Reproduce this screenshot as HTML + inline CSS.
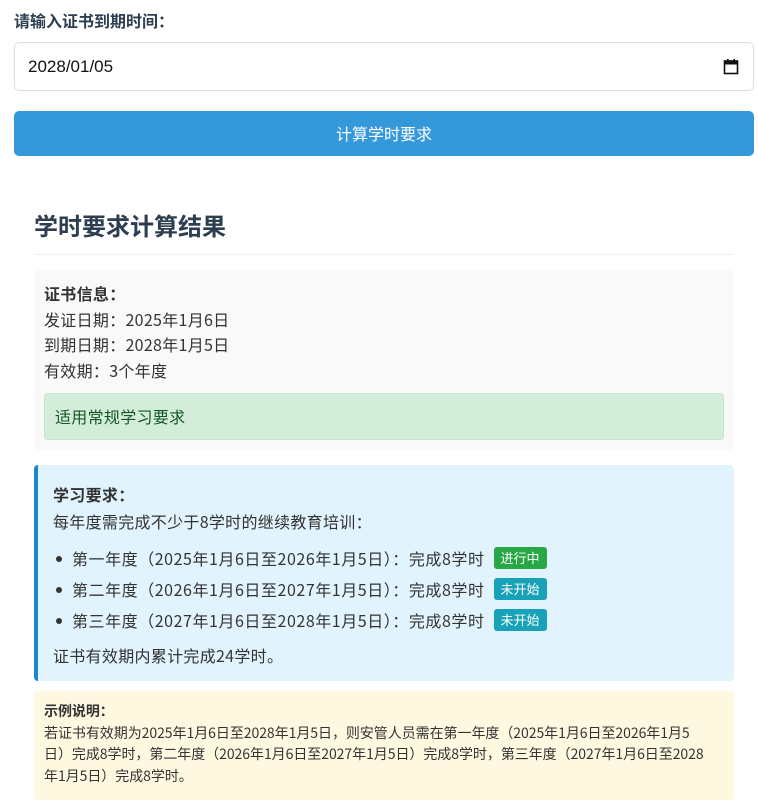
<!DOCTYPE html>
<html><head><meta charset="utf-8"><style>
*{box-sizing:border-box;margin:0;padding:0}
body{width:758px;height:808px;background:#fff;font-family:"Noto Sans CJK SC","Liberation Sans",sans-serif;color:#333;font-size:16px;position:relative;overflow:hidden}
.a{position:absolute}
.lbl{left:14px;top:8px;font-weight:bold;color:#2c3e50;font-size:16px;line-height:24px}
.inp{left:14px;top:42px;width:740px;height:49px;border:1px solid #ddd;border-radius:5px;font-size:17px;padding:0 13px;line-height:47px;color:#111;font-family:"Liberation Sans",sans-serif}
.btn{left:14px;top:111px;width:740px;height:45px;background:#3498db;border-radius:5px;color:#fff;text-align:center;line-height:45px;font-size:16px}
h2{position:absolute;left:34px;top:208px;font-size:24px;line-height:34px;color:#2c3e50}
.hr{left:34px;top:254px;width:700px;height:1px;background:#eee}
.cert{left:34px;top:270px;width:700px;height:180px;background:#f9f9f9;border-radius:5px;padding:11px 10px;line-height:25.5px;letter-spacing:0.3px}
.ok{margin-top:10px;background:#d4edda;border:1px solid #c3e6cb;border-radius:4px;color:#155724;height:47px;line-height:45px;padding-left:10px}
.req{left:34px;top:465px;width:700px;height:216px;background:#e1f3fd;border-left:4px solid #1a86d0;border-radius:4px;padding:16px 15px;line-height:27px;letter-spacing:0.3px}
ul{list-style:none;margin:8px 0 6px}
li{height:31px;line-height:31px;position:relative;padding-left:19px;white-space:nowrap;letter-spacing:0.55px}
li:before{content:"";position:absolute;left:3px;top:13px;width:6px;height:6px;border-radius:50%;background:#333}
.b{display:inline-block;color:#fff;font-size:13px;line-height:22px;height:22px;padding:0 7px;border-radius:3px;margin-left:9px;vertical-align:2px;letter-spacing:0}
.g{background:#28a745}.c{background:#17a2b8}
.ex{left:34px;top:691px;width:700px;height:109px;background:#fff8e1;border-radius:4px;padding:10px 10px;font-size:14px;line-height:21.7px;white-space:nowrap;letter-spacing:-0.05px}
</style></head><body>
<div class="a lbl">请输入证书到期时间：</div>
<div class="a inp">2028/01/05<svg style="position:absolute;right:14px;top:15px" width="16" height="17" viewBox="0 0 16 17"><rect x="1.5" y="3" width="13" height="12.5" fill="none" stroke="#111" stroke-width="1.6"/><rect x="1.5" y="3" width="13" height="3.5" fill="#111"/><rect x="4" y="1" width="1.6" height="3" fill="#111"/><rect x="10.4" y="1" width="1.6" height="3" fill="#111"/></svg></div>
<div class="a btn">计算学时要求</div>
<h2>学时要求计算结果</h2>
<div class="a hr"></div>
<div class="a cert"><b>证书信息：</b><br>发证日期：2025年1月6日<br>到期日期：2028年1月5日<br>有效期：3个年度
<div class="ok">适用常规学习要求</div></div>
<div class="a req"><b>学习要求：</b><br>每年度需完成不少于8学时的继续教育培训：
<ul><li>第一年度（2025年1月6日至2026年1月5日）：完成8学时<span class="b g">进行中</span></li>
<li>第二年度（2026年1月6日至2027年1月5日）：完成8学时<span class="b c">未开始</span></li>
<li>第三年度（2027年1月6日至2028年1月5日）：完成8学时<span class="b c">未开始</span></li></ul>
证书有效期内累计完成24学时。</div>
<div class="a ex"><b>示例说明：</b><br>若证书有效期为2025年1月6日至2028年1月5日，则安管人员需在第一年度（2025年1月6日至2026年1月5<br>日）完成8学时，第二年度（2026年1月6日至2027年1月5日）完成8学时，第三年度（2027年1月6日至2028<br>年1月5日）完成8学时。</div>
</body></html>
